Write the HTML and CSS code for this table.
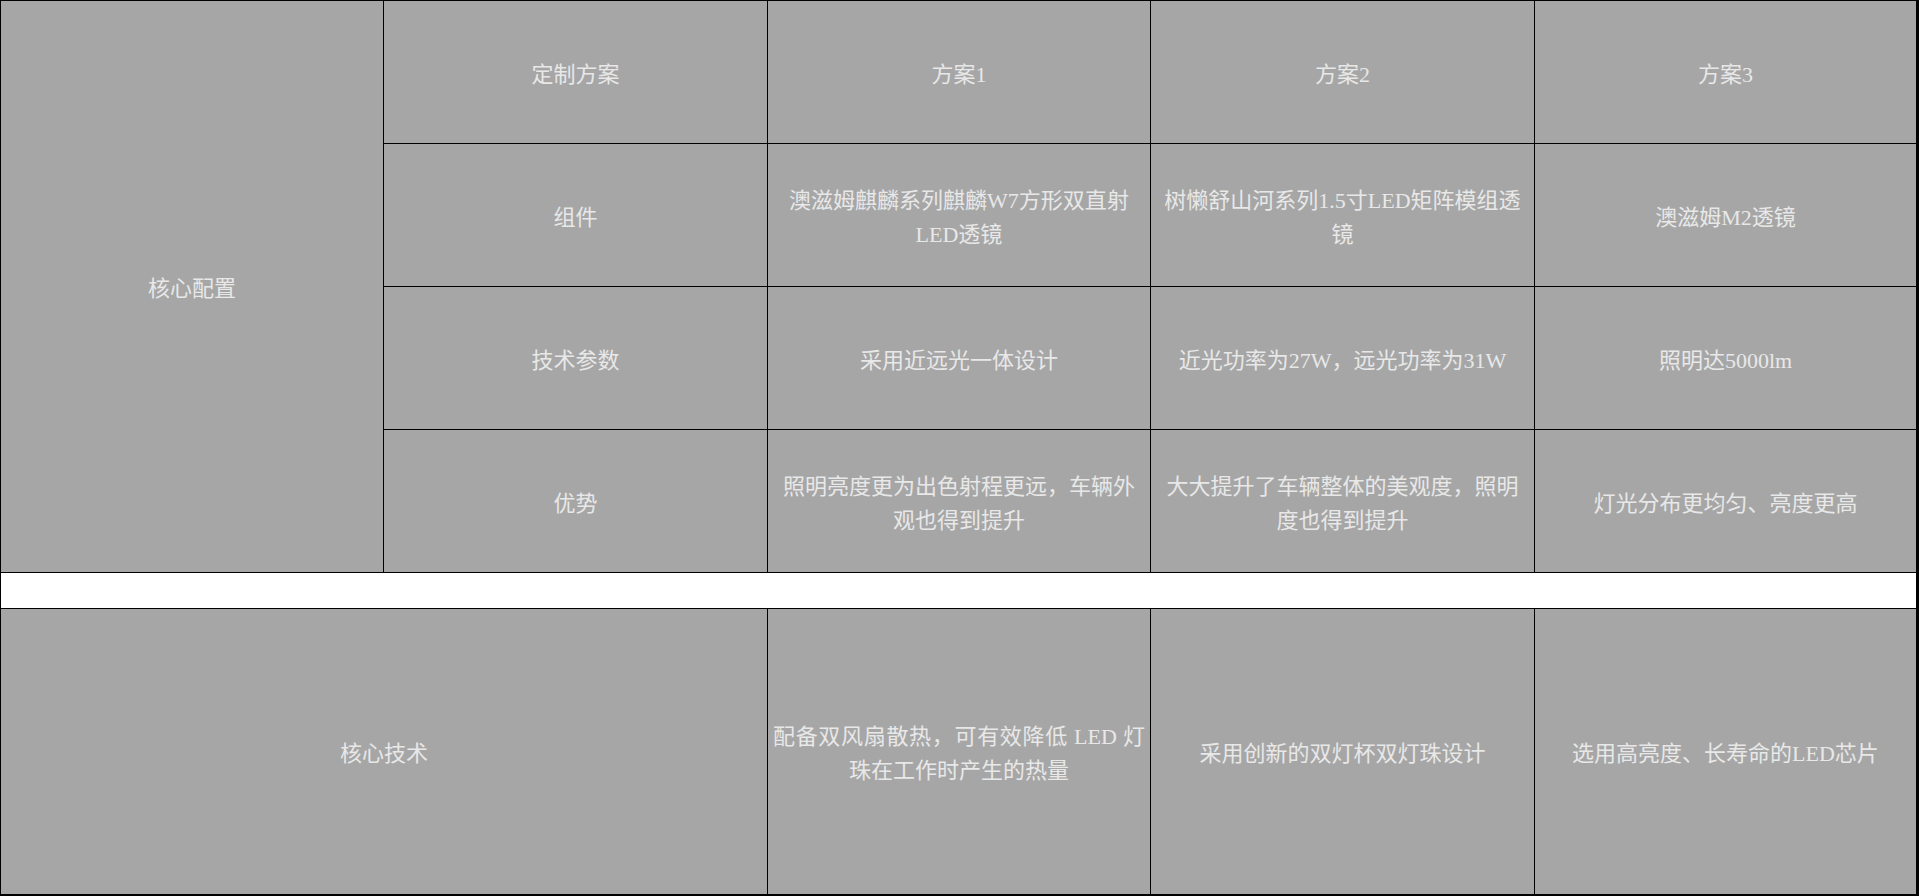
FILE: index.html
```html
<!DOCTYPE html>
<html lang="zh-CN">
<head>
<meta charset="utf-8">
<title>定制方案</title>
<link rel="stylesheet" href="styles.css">
</head>
<body>
<div class="table">
  <div class="cell core-config">核心配置</div>
  <div class="cell">定制方案</div>
  <div class="cell">方案1</div>
  <div class="cell">方案2</div>
  <div class="cell">方案3</div>

  <div class="cell">组件</div>
  <div class="cell">澳滋姆麒麟系列麒麟W7方形双直射LED透镜</div>
  <div class="cell">树懒舒山河系列1.5寸LED矩阵模组透镜</div>
  <div class="cell">澳滋姆M2透镜</div>

  <div class="cell">技术参数</div>
  <div class="cell">采用近远光一体设计</div>
  <div class="cell">近光功率为27W，远光功率为31W</div>
  <div class="cell">照明达5000lm</div>

  <div class="cell">优势</div>
  <div class="cell">照明亮度更为出色射程更远，车辆外观也得到提升</div>
  <div class="cell">大大提升了车辆整体的美观度，照明度也得到提升</div>
  <div class="cell">灯光分布更均匀、亮度更高</div>

  <div class="spacer"></div>

  <div class="cell core-tech">核心技术</div>
  <div class="cell justify">配备双风扇散热，可有效降低 LED 灯珠在工作时产生的热量</div>
  <div class="cell">采用创新的双灯杯双灯珠设计</div>
  <div class="cell">选用高亮度、长寿命的LED芯片</div>
</div>
</body>
</html>
```

FILE: styles.css
```css
html, body {
  margin: 0;
  padding: 0;
  background: #000;
}

.table {
  display: grid;
  grid-template-columns: 382px 383px 382px 383px 381px;
  grid-template-rows: 142px 142px 142px 142px 35px 285px;
  gap: 1px;
  padding: 1px 3px 2px 1px;
  width: 1915px;
  height: 893px;
  background: #000;
  font-family: "Liberation Serif", "Noto Sans CJK SC", serif;
  font-size: 22px;
  line-height: 34px;
  color: #e8e8e8;
}

.cell {
  background: #a6a6a6;
  display: flex;
  align-items: center;
  justify-content: center;
  text-align: center;
  padding: 5px 5px 0;
}

.core-config {
  grid-row: 1 / span 4;
}

.spacer {
  grid-column: 1 / -1;
  background: #fff;
}

.core-tech {
  grid-column: 1 / span 2;
}

.justify {
  text-align: justify;
  text-align-last: center;
}
```
